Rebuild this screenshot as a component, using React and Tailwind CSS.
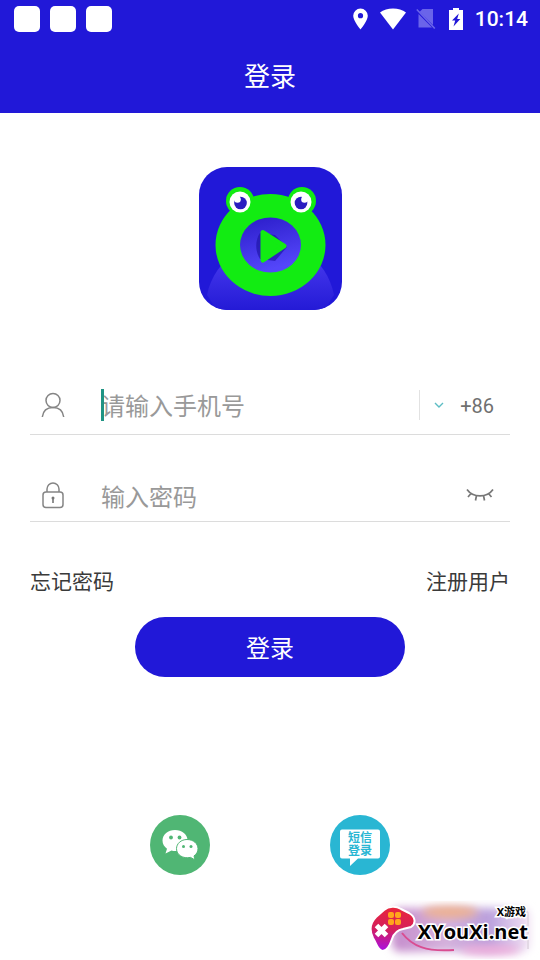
import React from 'react';

function StatusBar() {
  return (
    <div className="flex h-[38px] items-center justify-between pl-[14px] pr-3">
      <div className="flex gap-[10px]">
        <span className="size-[26px] rounded-[5px] bg-white"></span>
        <span className="size-[26px] rounded-[5px] bg-white"></span>
        <span className="size-[26px] rounded-[5px] bg-white"></span>
      </div>

      <div className="flex items-center text-white">
        {/* Location */}
        <svg className="mr-3 h-[22px] w-[15px]" viewBox="0 0 15 22" fill="currentColor">
          <path fillRule="evenodd" d="M7.5 0.5A7.3 7.3 0 0 0 .2 7.8C.2 13 7.5 21.5 7.5 21.5S14.8 13 14.8 7.8A7.3 7.3 0 0 0 7.5.5Zm0 4.6a2.6 2.6 0 1 1 0 5.2 2.6 2.6 0 0 1 0-5.2Z" />
        </svg>
        {/* Wifi */}
        <svg className="mr-[10px] h-[22px] w-[26px]" viewBox="0 0 26 22" fill="currentColor">
          <path d="M0 4.6C3.5 1.9 8 .5 13 .5s9.500 1.400 13 4.100L13 21.500Z" />
        </svg>
        {/* No sim */}
        <svg className="mr-[13px] h-[22px] w-[20px]" viewBox="0 0 20 22">
          <path d="M6.500 1H17V17L3.500 4Z" fill="#6a64ea" />
          <path d="M2.500 6 16 19.500H2.500Z" fill="#6a64ea" />
          <path d="M.8 1.500 18.800 20.500" stroke="#6a64ea" strokeWidth="1.600" />
        </svg>
        {/* Battery */}
        <svg className="mr-3 h-[22px] w-[14px]" viewBox="0 0 14 22" fill="currentColor">
          <path fillRule="evenodd" d="M4 0h6v2h4v20H0V2h4ZM9.800 5.500 3 12.500h3.200L4.500 18.500 11.300 11H8.200Z" />
        </svg>
        <span className="font-['Roboto',sans-serif] text-[21px] leading-[26px] font-medium">10:14</span>
      </div>
    </div>
  );
}

function FrogLogo() {
  return (
    <svg className="size-[143px]" viewBox="0 0 143 143" role="img" aria-label="logo">
      <defs>
        <linearGradient id="glow" x1="0" y1="0" x2="0" y2="1">
          <stop offset="0" stopColor="#4a3df0" />
          <stop offset="1" stopColor="#241ad6" />
        </linearGradient>
        <linearGradient id="mouth" x1="0" y1="0" x2="0.3" y2="1">
          <stop offset="0" stopColor="#2a1cc8" />
          <stop offset="1" stopColor="#5446fa" />
        </linearGradient>
        <clipPath id="tile">
          <rect width="143" height="143" rx="28" />
        </clipPath>
      </defs>
      <g clipPath="url(#tile)">
        <rect width="143" height="143" fill="#2118d8" />
        <path d="M8 128C12 108 25 91 40 85H104C119 91 131 108 135 128L125 143H18Z" fill="url(#glow)" />
        <circle cx="41" cy="34" r="14" fill="#12ec12" />
        <circle cx="103" cy="34" r="14" fill="#12ec12" />
        <ellipse cx="71.500" cy="78" rx="55" ry="51" fill="#12ec12" />
        <circle cx="41" cy="35" r="10.500" fill="#fff" />
        <circle cx="102" cy="35" r="10.500" fill="#fff" />
        <circle cx="41.500" cy="36" r="6.300" fill="#2a1dc0" />
        <circle cx="102" cy="36" r="6.300" fill="#2a1dc0" />
        <circle cx="38.500" cy="32.500" r="3.300" fill="#fff" />
        <circle cx="105.500" cy="32.500" r="3.300" fill="#fff" />
        <ellipse cx="71.500" cy="78" rx="30.500" ry="27.500" fill="url(#mouth)" />
        <path d="M61 66C56 73 56 84 61 92L76 94 88 80 76 68Z" fill="#2015a8" opacity="0.7" />
        <path d="M64 65.500 85 79 64 93Z" fill="#12ec12" stroke="#12ec12" strokeWidth="5" strokeLinejoin="round" />
      </g>
    </svg>
  );
}

function Watermark() {
  return (
    <div className="absolute right-0 bottom-0 h-[60px] w-[174px] overflow-hidden">
      <svg className="h-[60px] w-[174px]" viewBox="0 0 174 60">
        <defs>
          <filter id="soft" x="-20%" y="-40%" width="140%" height="180%">
            <feGaussianBlur stdDeviation="4" />
          </filter>
          <linearGradient id="pad" x1="0.3" y1="0" x2="0.2" y2="1">
            <stop offset="0" stopColor="#e8253c" />
            <stop offset="0.500" stopColor="#d41f5c" />
            <stop offset="1" stopColor="#a80fe8" />
          </linearGradient>
          <linearGradient id="haze" x1="0" y1="0" x2="1" y2="0">
            <stop offset="0" stopColor="#c58ccc" />
            <stop offset="0.400" stopColor="#d5b2dc" />
            <stop offset="0.700" stopColor="#b99fdc" />
            <stop offset="1" stopColor="#f3e3f4" />
          </linearGradient>
        </defs>
        <rect x="26" y="8" width="138" height="44" rx="8" fill="url(#haze)" filter="url(#soft)" />
        <ellipse cx="84" cy="12" rx="28" ry="6" fill="#edb08f" filter="url(#soft)" />
        <ellipse cx="124" cy="50" rx="30" ry="5" fill="#eeaad9" filter="url(#soft)" />
        <path d="M152 10h5q5 0 5 5v34" fill="none" stroke="#e3d9e5" strokeWidth="2" />
        <path d="M36 33C46 46 60 52 88 50" fill="none" stroke="#d94d91" strokeWidth="2" />
        <path d="M18 10C23 6 30 6 35 9L43 13C50 17 50 24 45 27L37 29C31 30 28 33 26 39 24 45 21 51 16.500 51 11 50 11 44 7 38 3 30 4 23 10 17Z" fill="url(#pad)" stroke="#fff" strokeWidth="2" />
        <path d="m10.500 25.500 10 10m0-10-10 10" stroke="#fff" strokeWidth="5" />
        <g fill="#ffa51c">
          <rect x="22" y="12" width="6" height="6" rx="2" />
          <rect x="29" y="12" width="6" height="6" rx="2" />
          <rect x="22" y="19" width="6" height="6" rx="2" />
          <rect x="29" y="19" width="6" height="6" rx="2" />
        </g>
      </svg>
      <div className="absolute inset-0 flex flex-col items-end pt-1 pr-3 font-bold text-black [paint-order:stroke_fill] [-webkit-text-stroke:3px_white]">
        <span className="pr-[2px] font-['Noto_Sans','Noto_Sans_CJK_SC',sans-serif] text-[11px] leading-4">X游戏</span>
        <span className="font-['Open_Sans',sans-serif] text-xl leading-6">XYouXi.net</span>
      </div>
    </div>
  );
}

export default function App() {
  return (
    <div className="relative flex min-h-screen flex-col bg-white font-['Roboto','Noto_Sans_CJK_SC',sans-serif]">
      <header className="bg-[#2118d8]">
        <StatusBar />
        <h1 className="h-[75px] pt-1 text-center text-[26px] leading-[71px] text-white">登录</h1>
      </header>

      <main className="flex flex-col px-[30px] pt-[54px] pb-[85px]">
        <div className="flex justify-center">
          <FrogLogo />
        </div>

        <form className="mt-[65px] flex flex-col" onSubmit={(e) => e.preventDefault()}>
          {/* Phone */}
          <div className="flex h-[60px] items-center border-b border-[#dcdcdc] pl-[11px]">
            <label htmlFor="phone" aria-label="手机号" className="mr-9">
              <svg className="h-[26px] w-6" viewBox="0 0 24 26" fill="none" stroke="#858585" strokeWidth="1.500">
                <circle cx="12" cy="8.500" r="7" />
                <path d="M1.300 25C2 19 6 15.500 12 15.500S22 19 22.700 25" />
              </svg>
            </label>
            <div className="relative flex min-w-0 flex-1">
              <input id="phone" type="tel" placeholder="请输入手机号" className="h-10 w-full pt-1 text-2xl text-[#333] outline-none placeholder:text-[#999]" />
              <span className="absolute top-1 left-0 h-8 w-[3px] bg-[#1f9484]"></span>
            </div>
            <button type="button" className="flex h-[30px] items-center border-l border-[#e2e2e2] pt-[2px] pr-4 pl-[14px] text-xl text-[#707070]">
              <svg className="mr-4 h-[10px] w-[10px]" viewBox="0 0 10 10" fill="none" stroke="#5dbdc4" strokeWidth="1.400">
                <path d="m1 2 4 4 4-4" />
              </svg>
              +86
            </button>
          </div>

          {/* Password */}
          <div className="mt-[35px] flex h-[52px] items-center border-b border-[#dcdcdc] pl-[11px]">
            <label htmlFor="password" aria-label="密码" className="mr-9">
              <svg className="h-[28px] w-6" viewBox="0 0 24 28" fill="none" stroke="#858585" strokeWidth="1.500">
                <rect x="2" y="10" width="20" height="15.500" rx="3" />
                <path d="M6 10V7a6 6 0 0 1 12 0V10" />
                <path d="M12 16v5" strokeWidth="1.800" />
                <circle cx="12" cy="16" r="1.500" fill="#777" stroke="none" />
              </svg>
            </label>
            <input id="password" type="password" placeholder="输入密码" className="h-10 min-w-0 flex-1 pt-1 text-2xl text-[#333] outline-none placeholder:text-[#999]" />
            <button type="button" aria-label="显示密码" className="pr-4">
              <svg className="h-[14px] w-7" viewBox="0 0 28 14" fill="none" stroke="#777" strokeWidth="1.700">
                <path d="M1 .5C7 9 21 9 27 .5M5 4.500 2 8M10.500 6.500 9.500 11.500M17.500 6.500 18.500 11.500M22.500 4.500 25.500 8" />
              </svg>
            </button>
          </div>

          <div className="mt-[45px] flex h-[30px] items-center justify-between text-[21px] leading-[30px] text-[#3a3a3a]">
            <a href="#forgot">忘记密码</a>
            <a href="#register">注册用户</a>
          </div>

          <button type="submit" className="mt-5 h-[60px] w-[270px] self-center rounded-full bg-[#2118d8] pt-1 text-2xl text-white">
            登录
          </button>
        </form>

        {/* Other sign-in methods */}
        <div className="mt-[138px] flex justify-center gap-30">
          <button type="button" aria-label="微信" className="size-[60px] rounded-full bg-[#50b674]">
            <svg className="size-[60px]" viewBox="0 0 60 60">
              <path d="M25 15C18 15 12.500 19.500 12.500 25.500c0 3.500 1.800 6.300 4.500 8.200l-1.500 4.800 6-3c7 2 16-1.500 16-10C37.500 19.500 32 15 25 15Z" fill="#fff" />
              <path d="M37 24.500c6.500 0 11 4.200 11 9.200 0 3-1.500 5.500-4 7.200l1 4-4.500-2.500C33 44 26.500 40 26.500 33.700c0-5 4.500-9.200 10.500-9.200Z" fill="#fff" stroke="#50b674" strokeWidth="1" />
              <g fill="#50b674">
                <circle cx="21" cy="22.500" r="1.900" />
                <circle cx="29.500" cy="22.500" r="1.900" />
                <circle cx="33.500" cy="31.500" r="1.500" />
                <circle cx="41" cy="31.500" r="1.500" />
              </g>
            </svg>
          </button>
          <button type="button" className="relative size-[60px] rounded-full bg-[#29b6d3]">
            <svg className="size-[60px]" viewBox="0 0 60 60" fill="#fff">
              <path d="M12 14.500H48q2 0 2 2V41.500q0 2-2 2H28L20 51V43.500H12q-2 0-2-2V16.500q0-2 2-2Z" />
            </svg>
            <span className="absolute inset-x-0 top-[17px] flex flex-col items-center text-[12px] leading-[13px] font-bold text-[#29b6d3]">
              <span>短信</span>
              <span>登录</span>
            </span>
          </button>
        </div>
      </main>

      <Watermark />
    </div>
  );
}
